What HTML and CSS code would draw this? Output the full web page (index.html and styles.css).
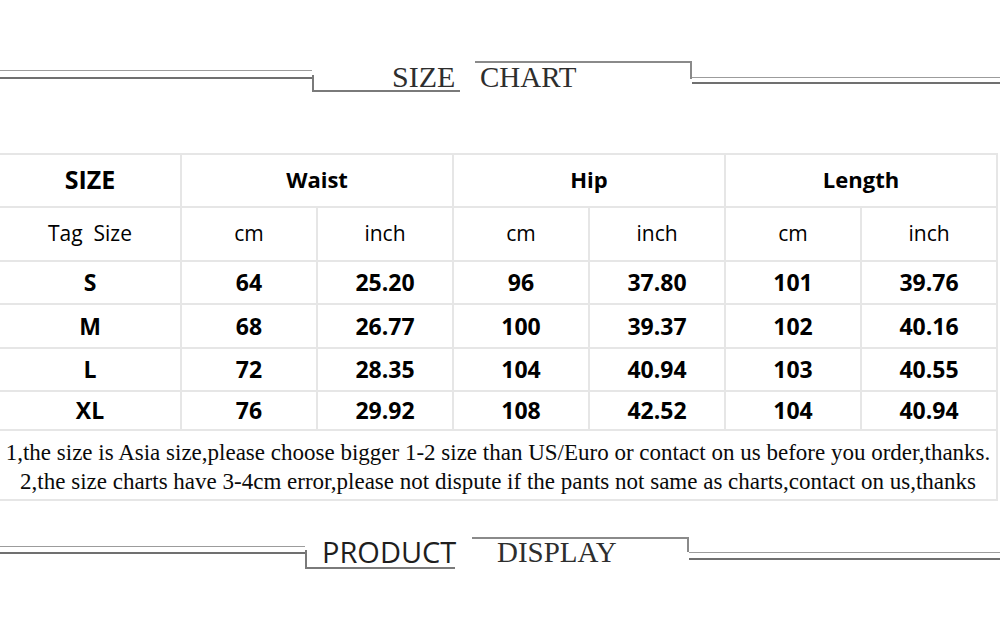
FILE: index.html
```html
<!DOCTYPE html>
<html lang="en">
<head>
<meta charset="utf-8">
<title>Size Chart</title>
<link rel="stylesheet" href="styles.css">
</head>
<body>
<div class="page">
  <div class="deco deco-top">
    <div class="dbl dbl-left"></div>
    <div class="under"><span>SIZE</span></div>
    <div class="over"><span>CHART</span></div>
    <div class="dbl dbl-right"></div>
  </div>

  <table class="chart">
    <colgroup>
      <col class="c-size">
      <col class="c-val"><col class="c-val">
      <col class="c-val"><col class="c-val">
      <col class="c-val"><col class="c-val">
    </colgroup>
    <tr class="r-head">
      <th class="big">SIZE</th>
      <th colspan="2">Waist</th>
      <th colspan="2">Hip</th>
      <th colspan="2">Length</th>
    </tr>
    <tr class="r-sub">
      <td>Tag&nbsp;&nbsp;Size</td>
      <td>cm</td><td>inch</td>
      <td>cm</td><td>inch</td>
      <td>cm</td><td>inch</td>
    </tr>
    <tr class="r-data">
      <td>S</td><td>64</td><td>25.20</td><td>96</td><td>37.80</td><td>101</td><td>39.76</td>
    </tr>
    <tr class="r-data r-m">
      <td>M</td><td>68</td><td>26.77</td><td>100</td><td>39.37</td><td>102</td><td>40.16</td>
    </tr>
    <tr class="r-data">
      <td>L</td><td>72</td><td>28.35</td><td>104</td><td>40.94</td><td>103</td><td>40.55</td>
    </tr>
    <tr class="r-data r-xl">
      <td>XL</td><td>76</td><td>29.92</td><td>108</td><td>42.52</td><td>104</td><td>40.94</td>
    </tr>
    <tr class="r-notes">
      <td colspan="7">1,the size is Asia size,please choose bigger 1-2 size than US/Euro or contact on us before you order,thanks.<br>2,the size charts have 3-4cm error,please not dispute if the pants not same as charts,contact on us,thanks</td>
    </tr>
  </table>

  <div class="deco deco-bottom">
    <div class="dbl dbl-left"></div>
    <div class="under"><span>PRODUCT</span></div>
    <div class="over"><span>DISPLAY</span></div>
    <div class="dbl dbl-right"></div>
  </div>
</div>
</body>
</html>
```
FILE: styles.css
```css
* { box-sizing: border-box; }

html, body {
  margin: 0;
  padding: 0;
  background: #ffffff;
}

.page {
  width: 1000px;
  height: 628px;
  overflow: hidden;
  font-family: "Open Sans", "Noto Sans", "DejaVu Sans", sans-serif;
  color: #000;
}

/* ---------- decorative title rules ---------- */
.deco {
  display: flex;
  align-items: flex-start;
  height: 45px;
}

.dbl {
  border-top: 1px solid #9c9c9c;
  border-bottom: 2px solid #707070;
}

.under {
  border-bottom: 2px solid #7a7a7a;
  background: linear-gradient(#7a7a7a, #7a7a7a) left bottom / 2px 15px no-repeat;
  white-space: nowrap;
}

.over {
  border-top: 2px solid #8a8a8a;
  background: linear-gradient(#8a8a8a, #8a8a8a) right top / 2px 16px no-repeat;
  white-space: nowrap;
}

.deco-top { margin-top: 55px; }

.deco-top .dbl-left {
  width: 312px;
  height: 9px;
  margin-top: 15px;
  flex: none;
}

.deco-top .under {
  width: 148px;
  flex: none;
  margin-top: 5px;
  padding: 4px 0 0 80px;
  font-family: "Liberation Serif", "Times New Roman", serif;
  font-size: 30px;
  line-height: 26px;
  color: #2e2e2e;
}

.deco-top .over {
  width: 217px;
  flex: none;
  margin-left: 15px;
  margin-top: 6px;
  padding: 1px 0 0 5px;
  font-family: "Liberation Serif", "Times New Roman", serif;
  font-size: 29px;
  line-height: 26px;
  color: #2e2e2e;
}

.deco-top .dbl-right {
  flex: 1;
  height: 7px;
  margin-top: 22px;
}

.deco-bottom { margin-top: 25px; }

.deco-bottom .dbl-left {
  width: 305px;
  height: 8px;
  margin-top: 20px;
  flex: none;
}

.deco-bottom .under {
  width: 150px;
  flex: none;
  margin-top: 11px;
  padding: 0 0 0 17px;
  font-family: "Open Sans", "Noto Sans", sans-serif;
  font-size: 29px;
  line-height: 30px;
  color: #1e1e1e;
  background-size: 2px 17px;
}

.deco-bottom .over {
  width: 217px;
  flex: none;
  margin-left: 17px;
  margin-top: 11px;
  padding: 0 0 0 25px;
  font-family: "Liberation Serif", "Times New Roman", serif;
  font-size: 29px;
  line-height: 26px;
  color: #2e2e2e;
  background-size: 2px 13px;
}

.deco-bottom .dbl-right {
  flex: 1;
  height: 8px;
  margin-top: 26px;
}

/* ---------- size table ---------- */
.chart {
  margin-top: 53px;
  width: 998px;
  table-layout: fixed;
  border-collapse: collapse;
}

.c-size { width: 181px; }
.c-val { width: 136px; }

.chart th,
.chart td {
  border: 2px solid #e6e6e6;
  padding: 0;
  text-align: center;
  vertical-align: middle;
  white-space: nowrap;
}

.chart tr > :first-child { border-left: none; }

.r-head { height: 53px; }
.r-head th {
  font-size: 22px;
  font-weight: 700;
  padding-bottom: 4px;
}
.r-head th.big { font-size: 25px; }

.r-sub { height: 54px; }
.r-sub td {
  font-size: 21px;
  font-weight: 400;
  padding-bottom: 2px;
}

.r-data { height: 43px; }
.r-m { height: 44px; }
.r-xl { height: 39px; }
.r-data td {
  font-size: 23px;
  font-weight: 700;
  padding-bottom: 1px;
}

.r-notes { height: 70px; }
.r-notes td {
  font-family: "Liberation Serif", "Times New Roman", serif;
  font-size: 23px;
  line-height: 29px;
  color: #0a0a0a;
  padding-top: 3px;
}
```
